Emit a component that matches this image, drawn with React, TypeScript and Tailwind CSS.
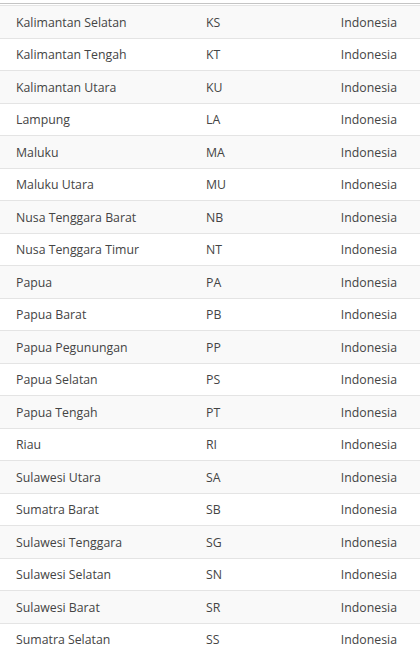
const rows: [string, string, string][] = [
  ["Kalimantan Selatan", "KS", "Indonesia"],
  ["Kalimantan Tengah", "KT", "Indonesia"],
  ["Kalimantan Utara", "KU", "Indonesia"],
  ["Lampung", "LA", "Indonesia"],
  ["Maluku", "MA", "Indonesia"],
  ["Maluku Utara", "MU", "Indonesia"],
  ["Nusa Tenggara Barat", "NB", "Indonesia"],
  ["Nusa Tenggara Timur", "NT", "Indonesia"],
  ["Papua", "PA", "Indonesia"],
  ["Papua Barat", "PB", "Indonesia"],
  ["Papua Pegunungan", "PP", "Indonesia"],
  ["Papua Selatan", "PS", "Indonesia"],
  ["Papua Tengah", "PT", "Indonesia"],
  ["Riau", "RI", "Indonesia"],
  ["Sulawesi Utara", "SA", "Indonesia"],
  ["Sumatra Barat", "SB", "Indonesia"],
  ["Sulawesi Tenggara", "SG", "Indonesia"],
  ["Sulawesi Selatan", "SN", "Indonesia"],
  ["Sulawesi Barat", "SR", "Indonesia"],
  ["Sumatra Selatan", "SS", "Indonesia"],
];

export default function App() {
  return (
    <div className="h-[647px] overflow-hidden bg-white pt-[3px] font-['Open_Sans',sans-serif] text-[12.3px] text-[#444]">
      <div className="border-t border-[#c4c4c4] pt-px">
        {rows.map(([name, code, country], i) => (
          <div
            key={code}
            className={`grid h-[32.5px] grid-cols-[190px_1fr_auto] items-center border-t border-[#e4e4e4] pl-4 pr-[23px] pt-[2px] ${
              i % 2 === 0 ? "bg-[#f9f9f9]" : "bg-white"
            }`}
          >
            <span>{name}</span>
            <span>{code}</span>
            <span>{country}</span>
          </div>
        ))}
      </div>
    </div>
  );
}
